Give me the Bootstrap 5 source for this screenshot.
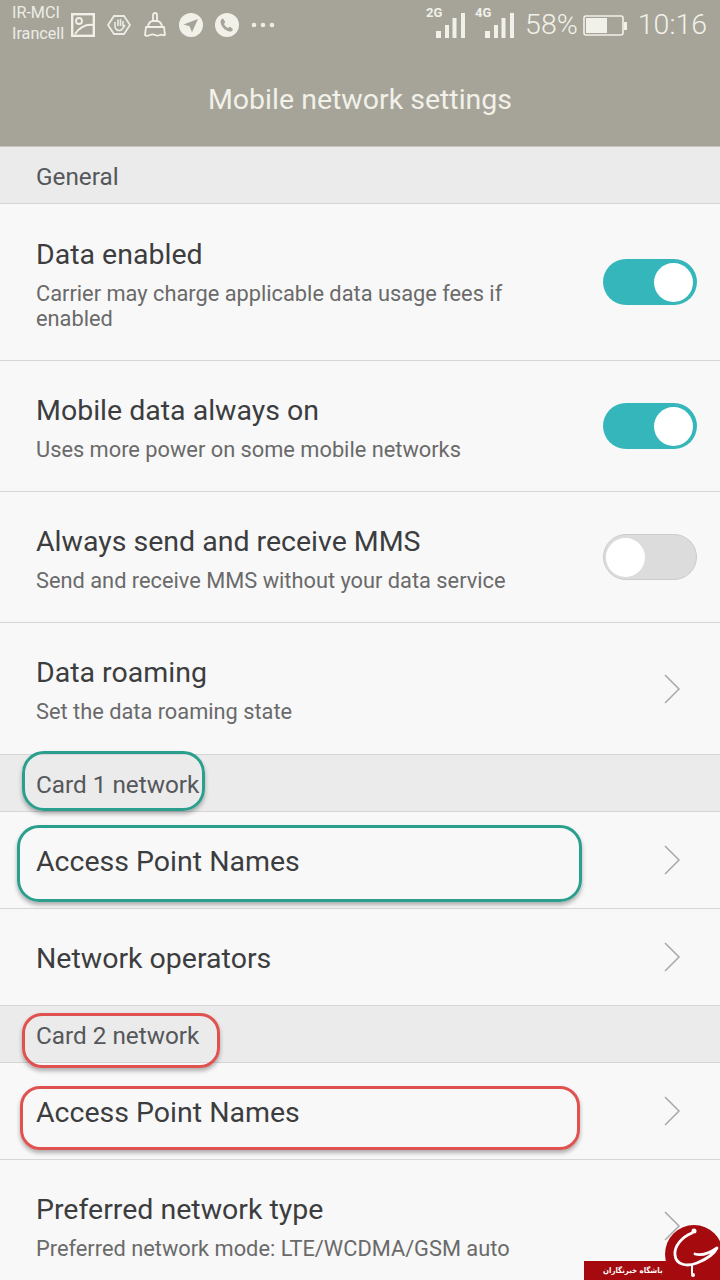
<!DOCTYPE html>
<html lang="en">
<head>
  <meta charset="UTF-8" />
  <title>Mobile network settings</title>
  <link href="https://cdn.jsdelivr.net/npm/bootstrap@5.3.0/dist/css/bootstrap.min.css" rel="stylesheet">
  <style>
    body {
      font-family: Roboto, "Liberation Sans", sans-serif;
      background: #f8f8f8;
      height: 1280px;
      overflow: hidden;
    }
    .phone { position: relative; width: 720px; height: 1280px; overflow: hidden; }
    .top-bar { background: #a6a498; height: 147px; color: #f1f1ea; border-bottom: 1px solid #c4c4bf; }
    .status-row { height: 50px; padding: 0 13px 0 12px; }
    .carrier { font-size: 16.2px; line-height: 21px; width: 59px; margin-bottom: 4px; color: #ecece6; white-space: nowrap; }
    .status-icons { gap: 12px; }
    .status-text { font-size: 28.5px; line-height: 32px; font-weight: 300; color: #f1f1ea; }
    .net-tag { font-size: 13px; font-weight: 700; position: absolute; left: 0; top: -1px; line-height: 12px; }
    .signal { position: relative; width: 39px; height: 30px; margin-bottom: 4px; }
    .signal svg { position: absolute; right: 0; bottom: 0; }
    .signal + .signal { margin-left: 10px; }
    .gap-pct { margin-left: 11px; }
    .gap-bat { margin-left: 5px; }
    .gap-clock { margin-left: 10px; }
    .screen-title { font-size: 28.5px; line-height: 36px; text-align: center; padding-top: 32px; margin: 0; font-weight: 400; }
    .list-group-item.set-row {
      background: #f8f8f8;
      border-color: #d6d6d6;
      border-width: 0 0 1px;
      padding: 0 23px 0 36px;
      color: #3a3a3a;
    }
    .list-group-item.sect-row {
      background: #ebebeb;
      border-color: #d6d6d6;
      border-width: 0 0 1px;
      padding: 5px 36px 0;
      height: 57px;
      font-size: 24.3px;
      color: #55575a;
    }
    .h-157 { height: 157px; }
    .h-131 { height: 131px; }
    .h-132 { height: 132px; }
    .h-97 { height: 97px; }
    .shift-a { padding-top: 3px; }
    .shift-b { padding-top: 3px; }
    .shift-d { padding-top: 1px; }
    .shift-c { padding-top: 4px; }
    .row-title { font-size: 28.5px; line-height: 36px; color: #3c3d3f; white-space: nowrap; }
    .row-sub { font-size: 21.8px; line-height: 25px; margin-top: 8px; color: #6a6a6a; max-width: 520px; }
    .sw-track {
      width: 94px; height: 46px; border-radius: 23px; background: #35b6bb;
      display: flex; align-items: center; justify-content: flex-end; padding: 0 4px; flex: none;
    }
    .sw-track.sw-off { background: #dcdcdc; border: 1px solid #cbcbcb; justify-content: flex-start; padding: 0 2px; }
    .sw-knob { width: 39px; height: 39px; border-radius: 50%; background: #fff; }
    .chev { flex: none; margin-right: 16px; }
    .ring { position: absolute; border: 3px solid; background: transparent; box-shadow: 0 3px 4px rgba(0,0,0,.3); z-index: 5; }
    .ring-green { border-color: #2b9f8e; border-radius: 22px; }
    .ring-red { border-color: #e0524f; border-radius: 20px; }
    .ring-a { left: 22px; top: 751px; width: 183px; height: 60px; }
    .ring-b { left: 17px; top: 825px; width: 565px; height: 77px; }
    .ring-c { left: 22px; top: 1013px; width: 198px; height: 55px; }
    .ring-d { left: 20px; top: 1086px; width: 560px; height: 64px; }
    .wm-bar {
      position: absolute; left: 584px; top: 1261px; width: 136px; height: 19px; background: #a50a0e;
      color: #fff; font-family: "DejaVu Sans Condensed", "DejaVu Sans", sans-serif; font-size: 7.800px; font-weight: 700; line-height: 19px;
      padding-left: 19px; z-index: 6; direction: rtl; text-align: left; white-space: nowrap;
    }
    .wm-disc { position: absolute; left: 665px; top: 1225px; z-index: 7; }
  </style>
</head>
<body>
  <div class="phone">
    <header class="top-bar">
      <div class="status-row d-flex justify-content-between align-items-center">
        <div class="d-flex align-items-center">
          <div class="carrier">IR-MCI<br>Irancell</div>
          <div class="status-icons d-flex align-items-center">
            <svg width="24" height="24" viewBox="0 0 24 24" fill="none" stroke="#f1f1ea" stroke-width="2.4"><rect x="1.2" y="1.2" width="21.6" height="21.6"/><circle cx="8" cy="8" r="3" stroke-width="1.8"/><path d="M4 21 C9 14 14 11 22 12" stroke-width="2"/></svg>
            <svg width="24" height="24" viewBox="0 0 24 24" fill="none" stroke="#ecece6" stroke-width="1.8"><path d="M7 3h10l6 9-6 9H7l-6-9z"/><path d="M8 14V9M11 13V6.500M13.500 13V6M16 13.500V8M8 14c1 4 6 5 8 1l2-3" stroke-width="1.600"/></svg>
            <svg width="24" height="26" viewBox="0 0 24 26" fill="none" stroke="#f1f1ea" stroke-width="1.8" stroke-linejoin="round"><path d="M10 9V3a2 2 0 0 1 4 0v6"/><path d="M5 15c0-4 3-6 5-6h4c2 0 5 2 5 6z"/><path d="M3 15h18l1 8c-2 1-3-1-5 0s-3 1-5 0-3-1-5 0-4 1-5 0z"/></svg>
            <svg width="24" height="24" viewBox="0 0 24 24"><circle cx="12" cy="12" r="12" fill="#f1f1ea"/><path d="M19 6 4.500 11.500l6 1.800 2.500 6z" fill="#a6a498"/></svg>
            <svg width="24" height="24" viewBox="0 0 24 24"><circle cx="12" cy="12" r="12" fill="#f1f1ea"/><path d="M8 5.500 10.300 9 9 11c.8 1.800 2 3 4 4l2-1.300 3 2.500c-.6 1.800-2 2.600-3.500 2.300C10 17.500 6.500 14 5.600 9.500 5.300 7.800 6.300 6 8 5.500z" fill="#a6a498"/></svg>
            <svg width="24" height="6" viewBox="0 0 24 6" fill="#ecece6"><circle cx="3" cy="3" r="2.300"/><circle cx="12" cy="3" r="2.300"/><circle cx="21" cy="3" r="2.300"/></svg>
          </div>
        </div>
        <div class="d-flex align-items-center">
          <div class="signal"><span class="net-tag">2G</span><svg width="29" height="25" viewBox="0 0 29 25" fill="#f1f1ea"><rect x="0" y="18" width="5" height="7"/><rect x="9" y="12" width="4" height="13"/><rect x="16.500" y="5" width="4" height="20"/><rect x="25" y="0" width="4" height="25"/></svg></div>
          <div class="signal"><span class="net-tag">4G</span><svg width="29" height="25" viewBox="0 0 29 25" fill="#f1f1ea"><rect x="0" y="18" width="5" height="7"/><rect x="9" y="12" width="4" height="13"/><rect x="16.500" y="5" width="4" height="20"/><rect x="25" y="0" width="4" height="25"/></svg></div>
          <span class="status-text gap-pct">58%</span>
          <svg class="gap-bat" width="45" height="21" viewBox="0 0 45 21"><rect x="1" y="1" width="39" height="19" rx="2" fill="none" stroke="#f1f1ea" stroke-width="1.600"/><rect x="3" y="3" width="21" height="15" fill="#f1f1ea"/><rect x="41" y="7" width="3" height="8" fill="#f1f1ea"/></svg>
          <span class="status-text gap-clock">10:16</span>
        </div>
      </div>
      <h1 class="screen-title">Mobile network settings</h1>
    </header>

    <div class="list-group list-group-flush rounded-0">
      <div class="list-group-item sect-row d-flex align-items-center">General</div>
      <div class="list-group-item set-row h-157 d-flex align-items-center justify-content-between">
        <div class="shift-a">
          <div class="row-title">Data enabled</div>
          <div class="row-sub">Carrier may charge applicable data usage fees if enabled</div>
        </div>
        <div class="sw-track"><span class="sw-knob"></span></div>
      </div>
      <div class="list-group-item set-row h-131 d-flex align-items-center justify-content-between">
        <div class="shift-b">
          <div class="row-title">Mobile data always on</div>
          <div class="row-sub">Uses more power on some mobile networks</div>
        </div>
        <div class="sw-track"><span class="sw-knob"></span></div>
      </div>
      <div class="list-group-item set-row h-131 d-flex align-items-center justify-content-between">
        <div class="shift-b">
          <div class="row-title">Always send and receive MMS</div>
          <div class="row-sub">Send and receive MMS without your data service</div>
        </div>
        <div class="sw-track sw-off"><span class="sw-knob"></span></div>
      </div>
      <div class="list-group-item set-row h-132 d-flex align-items-center justify-content-between">
        <div class="shift-d">
          <div class="row-title">Data roaming</div>
          <div class="row-sub">Set the data roaming state</div>
        </div>
        <svg class="chev" width="17" height="30" viewBox="0 0 17 30" fill="none" stroke="#a9a9a9" stroke-width="1.500"><path d="M1 1l14 14L1 29"/></svg>
      </div>
      <div class="list-group-item sect-row d-flex align-items-center">Card 1 network</div>
      <div class="list-group-item set-row h-97 d-flex align-items-center justify-content-between">
        <div class="row-title shift-c">Access Point Names</div>
        <svg class="chev" width="17" height="30" viewBox="0 0 17 30" fill="none" stroke="#a9a9a9" stroke-width="1.500"><path d="M1 1l14 14L1 29"/></svg>
      </div>
      <div class="list-group-item set-row h-97 d-flex align-items-center justify-content-between">
        <div class="row-title shift-c">Network operators</div>
        <svg class="chev" width="17" height="30" viewBox="0 0 17 30" fill="none" stroke="#a9a9a9" stroke-width="1.500"><path d="M1 1l14 14L1 29"/></svg>
      </div>
      <div class="list-group-item sect-row d-flex align-items-center">Card 2 network</div>
      <div class="list-group-item set-row h-97 d-flex align-items-center justify-content-between">
        <div class="row-title shift-c">Access Point Names</div>
        <svg class="chev" width="17" height="30" viewBox="0 0 17 30" fill="none" stroke="#a9a9a9" stroke-width="1.500"><path d="M1 1l14 14L1 29"/></svg>
      </div>
      <div class="list-group-item set-row h-131 d-flex align-items-center justify-content-between">
        <div class="shift-d">
          <div class="row-title">Preferred network type</div>
          <div class="row-sub">Preferred network mode: LTE/WCDMA/GSM auto</div>
        </div>
        <svg class="chev" width="17" height="30" viewBox="0 0 17 30" fill="none" stroke="#a9a9a9" stroke-width="1.500"><path d="M1 1l14 14L1 29"/></svg>
      </div>
    </div>

    <!-- hand drawn marks on the screenshot -->
    <div class="ring ring-green ring-a"></div>
    <div class="ring ring-green ring-b"></div>
    <div class="ring ring-red ring-c"></div>
    <div class="ring ring-red ring-d"></div>

    <!-- watermark -->
    <div class="wm-bar">باشگاه خبرنگاران</div>
    <svg class="wm-disc" width="55" height="55" viewBox="0 0 55 55"><circle cx="29" cy="29" r="29" fill="#a50a0e"/><path d="M27 8C17 12 9 21 10 30c1 10 12 12 22 8 10-4 17-9 20-15-7 5-14 8-22 6" fill="none" stroke="#fff" stroke-width="2.800" stroke-linecap="round" stroke-linejoin="round"/><circle cx="29" cy="6" r="2.500" fill="#fff"/><path d="M27 40v9" stroke="#fff" stroke-width="2"/><circle cx="28" cy="50" r="2" fill="#fff"/></svg>
  </div>

  <script src="https://cdn.jsdelivr.net/npm/bootstrap@5.3.0/dist/js/bootstrap.bundle.min.js"></script>
</body>
</html>
